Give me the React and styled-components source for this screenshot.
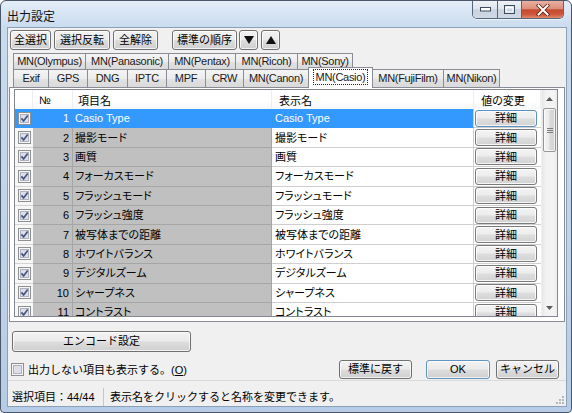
import React from "react";
import styled, { createGlobalStyle } from "styled-components";

const GlobalStyle = createGlobalStyle`
  html, body { margin: 0; padding: 0; background: #ffffff; }
  body {
    font-family: "Liberation Sans", "Noto Sans CJK JP", sans-serif;
    font-size: 11px;
    color: #000;
  }
  * { box-sizing: border-box; }
`;

const rows = [
  ["Casio Type", "Casio Type"],
  ["撮影モード", "撮影モード"],
  ["画質", "画質"],
  ["フォーカスモード", "フォーカスモード"],
  ["フラッシュモード", "フラッシュモード"],
  ["フラッシュ強度", "フラッシュ強度"],
  ["被写体までの距離", "被写体までの距離"],
  ["ホワイトバランス", "ホワイトバランス"],
  ["デジタルズーム", "デジタルズーム"],
  ["シャープネス", "シャープネス"],
  ["コントラスト", "コントラスト"],
];

const tabsTop = [
  ["MN(Olympus)", 73],
  ["MN(Panasonic)", 84],
  ["MN(Pentax)", 68],
  ["MN(Ricoh)", 63],
  ["MN(Sony)", 56],
];

const tabsBottom = [
  ["Exif", 36],
  ["GPS", 40],
  ["DNG", 41],
  ["IPTC", 40],
  ["MPF", 40],
  ["CRW", 39],
  ["MN(Canon)", 66],
  ["MN(Casio)", 65, true],
  ["MN(FujiFilm)", 72],
  ["MN(Nikon)", 57],
];

const CheckBox = ({ checked }) => (
  <svg width="13" height="13" viewBox="0 0 13 13">
    <rect x="0.5" y="0.5" width="12" height="12" fill="#f6f6f6" stroke="#8e8f8f" />
    <rect x="2.5" y="2.5" width="8" height="8" fill="#dcdee8" stroke="#aeb2c0" />
    {checked && (
      <path d="M3.4 6.4 L5.6 8.9 L9.7 3.4" fill="none" stroke="#46557e" strokeWidth="1.7" />
    )}
  </svg>
);

const Arrow = ({ up }) => (
  <svg width="7" height="4" viewBox="0 0 7 4">
    <path d={up ? "M0 4 L3.5 0 L7 4 Z" : "M0 0 L7 0 L3.5 4 Z"} fill="#5a5a5a" />
  </svg>
);

const Tri = ({ up }) => (
  <svg width="10" height="8" viewBox="0 0 10 8">
    <path d={up ? "M0 8 L5 0 L10 8 Z" : "M0 0 L10 0 L5 8 Z"} fill="#111" />
  </svg>
);

const App = () => {
  return (
    <>
      <GlobalStyle />
      <Window>
        <TitleBar>
          <Title>出力設定</Title>
          <Caption>
            <CapBtn $w={24}>
              <svg width="11" height="5" viewBox="0 0 11 5">
                <rect x="0.5" y="0.5" width="10" height="3.5" fill="#fff" stroke="#3e4c60" />
              </svg>
            </CapBtn>
            <CapBtn $w={24}>
              <svg width="11" height="9" viewBox="0 0 11 9">
                <rect x="0.5" y="0.5" width="10" height="8" fill="none" stroke="#3e4c60" />
                <rect x="2" y="2.5" width="7" height="4.5" fill="none" stroke="#fff" />
              </svg>
            </CapBtn>
            <CapBtn $w={42} $close>
              <svg width="14" height="12" viewBox="0 0 14 12">
                <path d="M2.5 1.5 L11.5 10.5 M11.5 1.5 L2.5 10.5" stroke="#5b1c10" strokeWidth="3.6" strokeLinecap="square" />
                <path d="M2.5 1.5 L11.5 10.5 M11.5 1.5 L2.5 10.5" stroke="#fff" strokeWidth="2" strokeLinecap="square" />
              </svg>
            </CapBtn>
          </Caption>
        </TitleBar>

        <Client>
          <Toolbar>
            <Button $w={41}>全選択</Button>
            <Button $w={56} $ml={3}>選択反転</Button>
            <Button $w={45} $ml={3}>全解除</Button>
            <Button $w={65} $ml={14}>標準の順序</Button>
            <Button $w={19} $ml={2}><Tri /></Button>
            <Button $w={19} $ml={3}><Tri up /></Button>
          </Toolbar>

          <TabStrip>
            <TabRow $h={16}>
              {tabsTop.map(([label, w], i) => (
                <Tab key={label} $w={w} $first={i === 0}>{label}</Tab>
              ))}
            </TabRow>
            <TabRow $h={18}>
              {tabsBottom.map(([label, w, active], i) => (
                <Tab key={label} $w={w} $first={i === 0} $active={active}>
                  {active ? <Focus>{label}</Focus> : label}
                </Tab>
              ))}
            </TabRow>
          </TabStrip>

          <Panel>
            <List>
              <GridArea>
                <HeaderRow>
                  <HeadCell />
                  <HeadCell $pl={6}>№</HeadCell>
                  <HeadCell $pl={5}>項目名</HeadCell>
                  <HeadCell $pl={7}>表示名</HeadCell>
                  <HeadCell $center>値の変更</HeadCell>
                </HeaderRow>
                {rows.map(([name, disp], i) => {
                  const sel = i === 0;
                  return (
                    <Row key={i}>
                      <CheckCell $sel={sel}><CheckBox checked /></CheckCell>
                      <NoCell $sel={sel}>{i + 1}</NoCell>
                      <NameCell $sel={sel}>{name}</NameCell>
                      <DispCell $sel={sel}>{disp}</DispCell>
                      <ActCell>
                        <DetailButton $sel={sel}>詳細</DetailButton>
                      </ActCell>
                    </Row>
                  );
                })}
              </GridArea>
              <ScrollBar>
                <ScrollArrow><Arrow up /></ScrollArrow>
                <Track>
                  <Thumb>
                    <Grip />
                  </Thumb>
                </Track>
                <ScrollArrow><Arrow /></ScrollArrow>
              </ScrollBar>
            </List>
          </Panel>

          <EncodeButton>エンコード設定</EncodeButton>

          <OptionRow>
            <CheckBox />
            <OptionLabel>出力しない項目も表示する。(<u>O</u>)</OptionLabel>
            <Button $w={73} $h={19} $ml="auto">標準に戻す</Button>
            <Button $w={64} $h={19} $ml={14} $default>OK</Button>
            <Button $w={63} $h={19} $ml={6}>キャンセル</Button>
          </OptionRow>

          <StatusBar>
            <StatusPane $w={92} $sep>選択項目：44/44</StatusPane>
            <StatusPane>表示名をクリックすると名称を変更できます。</StatusPane>
            <SizeGrip>
              <svg width="10" height="10" viewBox="0 0 10 10">
                {[[8, 0], [8, 3], [5, 3], [8, 6], [5, 6], [2, 6]].map(([x, y], k) => (
                  <rect key={k} x={x} y={y + 1} width="2" height="2" fill="#b4b9c0" />
                ))}
              </svg>
            </SizeGrip>
          </StatusBar>
        </Client>
      </Window>
    </>
  );
};

export default App;

const Window = styled.div`
  width: 572px;
  height: 413px;
  border: 1px solid #4b5769;
  border-radius: 6px 6px 4px 4px;
  background: linear-gradient(180deg, #e4eef8 0px, #d6e4f3 14px, #c9dbee 27px, #bfd3ea 60%, #b6cbe5 100%);
  display: flex;
  flex-direction: column;
  overflow: hidden;
`;

const TitleBar = styled.div`
  height: 26px;
  display: flex;
  align-items: flex-start;
  flex-shrink: 0;
`;

const Title = styled.div`
  margin: 8px 0 0 6px;
  font-family: "Noto Sans CJK JP", sans-serif;
  font-size: 12px;
  line-height: 14px;
  color: #111;
`;

const Caption = styled.div`
  margin-left: auto;
  margin-right: 7px;
  display: flex;
  height: 18px;
  border: 1px solid #56667c;
  border-top: none;
  border-radius: 0 0 5px 5px;
  overflow: hidden;
  box-shadow: 0 1px 0 rgba(255, 255, 255, 0.6);
`;

const CapBtn = styled.div`
  width: ${(p) => p.$w}px;
  display: flex;
  align-items: center;
  justify-content: center;
  background: ${(p) =>
    p.$close
      ? "linear-gradient(180deg, #eab0a2 0%, #dc8f7d 45%, #c54a31 52%, #cd5639 78%, #e1896c 100%)"
      : "linear-gradient(180deg, #eef2f7 0%, #dfe5ed 45%, #c9d3df 52%, #d0d9e4 100%)"};
  & + & {
    border-left: 1px solid #56667c;
  }
`;

const Client = styled.div`
  flex: 1;
  min-height: 0;
  margin: 0 4px 5px 6px;
  border: 1px solid #8ba1ba;
  background: #f0f0f0;
  display: flex;
  flex-direction: column;
`;

const Toolbar = styled.div`
  display: flex;
  padding: 2px 0 0 2px;
  height: 22px;
  flex-shrink: 0;
`;

const Button = styled.button`
  width: ${(p) => p.$w}px;
  height: ${(p) => p.$h || 20}px;
  margin-left: ${(p) => (p.$ml === "auto" ? "auto" : `${p.$ml || 0}px`)};
  padding: 0;
  font: inherit;
  font-size: 11px;
  line-height: 1;
  color: #000;
  border: 1px solid ${(p) => (p.$default ? "#5f95c0" : "#707070")};
  border-radius: 3px;
  background: linear-gradient(180deg, #f2f2f2 0%, #ebebeb 48%, #dddddd 52%, #cfcfcf 100%);
  box-shadow: inset 0 0 0 1px rgba(255, 255, 255, 0.75);
  display: flex;
  align-items: center;
  justify-content: center;
  white-space: nowrap;
  flex-shrink: 0;
`;

const TabStrip = styled.div`
  margin-top: 3px;
  padding-left: 5px;
  flex-shrink: 0;
`;

const TabRow = styled.div`
  display: flex;
  align-items: flex-start;
  height: ${(p) => p.$h}px;
`;

const Tab = styled.div`
  width: ${(p) => p.$w}px;
  height: ${(p) => (p.$active ? "21px" : "100%")};
  margin-top: ${(p) => (p.$active ? "-2px" : "0")};
  margin-left: ${(p) => (p.$first ? "0" : "-1px")};
  position: ${(p) => (p.$active ? "relative" : "static")};
  z-index: ${(p) => (p.$active ? 2 : "auto")};
  border: 1px solid #898c95;
  border-bottom: none;
  background: ${(p) =>
    p.$active ? "#ffffff" : "linear-gradient(180deg, #f4f4f4 0%, #ececec 50%, #e2e2e2 51%, #dadada 100%)"};
  display: flex;
  align-items: ${(p) => (p.$active ? "flex-start" : "center")};
  padding-top: ${(p) => (p.$active ? "2px" : "0")};
  justify-content: center;
  white-space: nowrap;
  line-height: 13px;
  letter-spacing: -0.3px;
  color: #1a1a1a;
  flex-shrink: 0;
`;

const Focus = styled.span`
  outline: 1px dotted #222;
  outline-offset: 0;
  padding: 1px 2px 0;
`;

const Panel = styled.div`
  margin: 0 1px;
  height: 235px;
  flex-shrink: 0;
  border: 1px solid #898c95;
  background: #ffffff;
  padding: 1px 6px 4px 4px;
  display: flex;
`;

const List = styled.div`
  flex: 1;
  border: 1px solid #828790;
  display: flex;
  overflow: hidden;
  background: #ffffff;
`;

const GridArea = styled.div`
  width: 526px;
  display: flex;
  flex-direction: column;
  overflow: hidden;
  font-feature-settings: "palt";
`;

const cols = "18px 40px 199px 202px 67px";

const HeaderRow = styled.div`
  display: grid;
  grid-template-columns: ${cols};
  height: 19px;
  flex-shrink: 0;
  background: linear-gradient(180deg, #ffffff 0%, #ffffff 60%, #f6f7f9 100%);
`;

const HeadCell = styled.div`
  display: flex;
  align-items: center;
  justify-content: ${(p) => (p.$center ? "center" : "flex-start")};
  padding-left: ${(p) => p.$pl || 0}px;
  padding-right: ${(p) => (p.$center ? 8 : 0)}px;
  border-right: 1px solid #eeeeee;
  font-size: 11px;
  white-space: nowrap;
`;

const Row = styled.div`
  display: grid;
  grid-template-columns: ${cols};
  height: 19.4px;
  flex-shrink: 0;
`;

const Cell = styled.div`
  display: flex;
  align-items: center;
  white-space: nowrap;
  overflow: hidden;
  line-height: 14px;
  color: ${(p) => (p.$sel ? "#ffffff" : "#000000")};
`;

const CheckCell = styled(Cell)`
  justify-content: center;
  background: ${(p) => (p.$sel ? "#3399ff" : "#f7f7f7")};
  border-bottom: 1px solid ${(p) => (p.$sel ? "#3399ff" : "#d4d4d4")};
  padding-left: 1px;
`;

const NoCell = styled(Cell)`
  justify-content: flex-end;
  padding-right: 3px;
  background: ${(p) => (p.$sel ? "#3399ff" : "#c0c0c0")};
  border-bottom: 1px solid ${(p) => (p.$sel ? "#3399ff" : "#a6a6a6")};
  border-right: 1px solid ${(p) => (p.$sel ? "#3399ff" : "#a6a6a6")};
`;

const NameCell = styled(Cell)`
  padding-left: 2px;
  background: ${(p) => (p.$sel ? "#3399ff" : "#c0c0c0")};
  border-bottom: 1px solid ${(p) => (p.$sel ? "#3399ff" : "#a6a6a6")};
  border-right: 1px solid ${(p) => (p.$sel ? "#3399ff" : "#a6a6a6")};
`;

const DispCell = styled(Cell)`
  padding-left: 3px;
  background: ${(p) => (p.$sel ? "#3399ff" : "#ffffff")};
  border-bottom: 1px solid ${(p) => (p.$sel ? "#3399ff" : "#cfcfcf")};
  border-right: 1px solid #cfcfcf;
`;

const ActCell = styled(Cell)`
  justify-content: center;
  padding-right: 3px;
  border-bottom: 1px solid #cfcfcf;
`;

const DetailButton = styled.div`
  width: 62px;
  height: 17px;
  border: 1px solid ${(p) => (p.$sel ? "#5b8fc0" : "#7a7a7a")};
  border-radius: 3px;
  background: linear-gradient(180deg, #f4f4f4 0%, #ececec 48%, #dedede 52%, #d2d2d2 100%);
  box-shadow: inset 0 0 0 1px rgba(255, 255, 255, 0.8);
  display: flex;
  align-items: center;
  justify-content: center;
  color: #000;
  font-size: 11px;
`;

const ScrollBar = styled.div`
  width: 16px;
  display: flex;
  flex-direction: column;
  background: linear-gradient(90deg, #e6e6e6 0%, #f2f2f2 25%, #f4f4f4 75%, #ebebeb 100%);
  border-left: 1px solid #efefef;
`;

const ScrollArrow = styled.div`
  height: 17px;
  display: flex;
  align-items: center;
  justify-content: center;
  flex-shrink: 0;
`;

const Track = styled.div`
  flex: 1;
  padding: 1px 1px 0 1px;
`;

const Thumb = styled.div`
  height: 44px;
  border: 1px solid #979797;
  border-radius: 2px;
  background: linear-gradient(90deg, #f4f4f4 0%, #eaeaea 45%, #d9d9d9 55%, #d2d2d2 100%);
  box-shadow: inset 0 0 0 1px rgba(255, 255, 255, 0.7);
  display: flex;
  align-items: center;
  justify-content: center;
`;

const Grip = styled.div`
  width: 6px;
  height: 5px;
  border-top: 1px solid #7d7d7d;
  border-bottom: 1px solid #7d7d7d;
  background: linear-gradient(180deg, transparent 1px, #7d7d7d 1px, #7d7d7d 2px, transparent 2px);
`;

const EncodeButton = styled(Button)`
  margin: 9px 0 0 4px;
  width: 179px;
  height: 21px;
`;

const OptionRow = styled.div`
  margin-top: 8px;
  height: 19px;
  display: flex;
  align-items: center;
  padding: 0 7px 0 3px;
  flex-shrink: 0;
`;

const OptionLabel = styled.span`
  margin-left: 4px;
  white-space: nowrap;
  line-height: 14px;
`;

const StatusBar = styled.div`
  flex: 1;
  display: flex;
  align-items: flex-end;
  border-top: 1px solid #dadada;
  padding-left: 4px;
  margin-top: 1px;
`;

const StatusPane = styled.div`
  width: ${(p) => (p.$w ? `${p.$w}px` : "auto")};
  height: 18px;
  line-height: 18px;
  padding-left: ${(p) => (p.$sep ? 0 : 6)}px;
  border-right: ${(p) => (p.$sep ? "1px solid #c6c6c6" : "none")};
  white-space: nowrap;
`;

const SizeGrip = styled.div`
  margin-left: auto;
  margin-right: 2px;
  margin-bottom: 1px;
  display: flex;
`;
